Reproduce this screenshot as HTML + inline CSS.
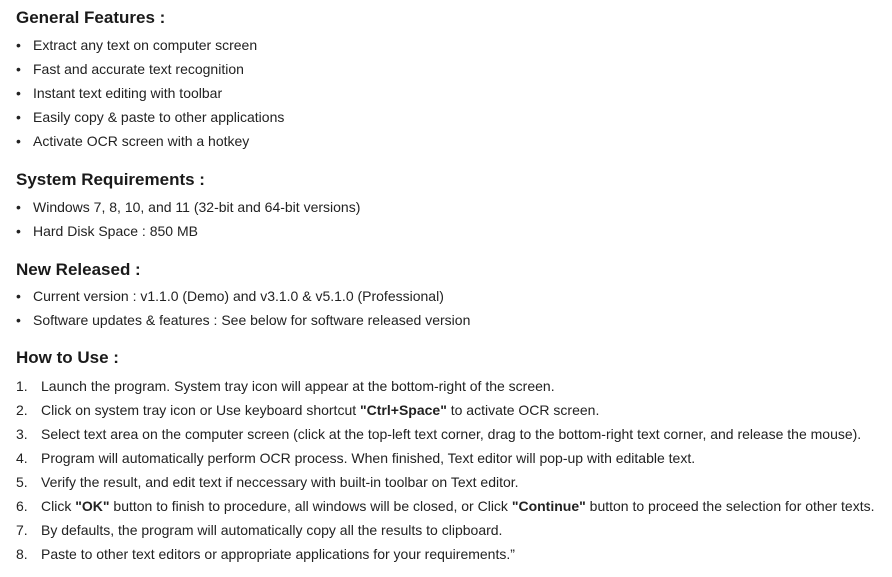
<!DOCTYPE html>
<html><head><meta charset="utf-8"><style>
body{margin:0;background:#fff;width:892px;height:577px;overflow:hidden;font-family:"Liberation Sans",sans-serif;color:#222;position:relative}
.h{position:absolute;left:16px;font-size:17px;font-weight:bold;line-height:20px;color:#1a1a1a}
.b{position:absolute;left:16px;font-size:14px;line-height:16px;white-space:nowrap}
.b span{display:inline-block;width:17px}
.n{position:absolute;left:16px;font-size:14px;line-height:16px;white-space:nowrap}
.n span{display:inline-block;width:25px}
</style></head><body>
<div class="h" style="top:8px">General Features :</div>
<div class="b" style="top:37px"><span>•</span>Extract any text on computer screen</div>
<div class="b" style="top:61px"><span>•</span>Fast and accurate text recognition</div>
<div class="b" style="top:85px"><span>•</span>Instant text editing with toolbar</div>
<div class="b" style="top:109px"><span>•</span>Easily copy &amp; paste to other applications</div>
<div class="b" style="top:133px"><span>•</span>Activate OCR screen with a hotkey</div>
<div class="h" style="top:170px">System Requirements :</div>
<div class="b" style="top:199px"><span>•</span>Windows 7, 8, 10, and 11 (32-bit and 64-bit versions)</div>
<div class="b" style="top:223px"><span>•</span>Hard Disk Space : 850 MB</div>
<div class="h" style="top:260px">New Released :</div>
<div class="b" style="top:288px"><span>•</span>Current version : v1.1.0 (Demo) and v3.1.0 &amp; v5.1.0 (Professional)</div>
<div class="b" style="top:312px"><span>•</span>Software updates &amp; features : See below for software released version</div>
<div class="h" style="top:348px">How to Use :</div>
<div class="n" style="top:378px"><span>1.</span>Launch the program. System tray icon will appear at the bottom-right of the screen.</div>
<div class="n" style="top:402px"><span>2.</span>Click on system tray icon or Use keyboard shortcut <b>"Ctrl+Space"</b> to activate OCR screen.</div>
<div class="n" style="top:426px"><span>3.</span>Select text area on the computer screen (click at the top-left text corner, drag to the bottom-right text corner, and release the mouse).</div>
<div class="n" style="top:450px"><span>4.</span>Program will automatically perform OCR process. When finished, Text editor will pop-up with editable text.</div>
<div class="n" style="top:474px"><span>5.</span>Verify the result, and edit text if neccessary with built-in toolbar on Text editor.</div>
<div class="n" style="top:498px"><span>6.</span>Click <b>"OK"</b> button to finish to procedure, all windows will be closed, or Click <b>"Continue"</b> button to proceed the selection for other texts.</div>
<div class="n" style="top:522px"><span>7.</span>By defaults, the program will automatically copy all the results to clipboard.</div>
<div class="n" style="top:546px"><span>8.</span>Paste to other text editors or appropriate applications for your requirements.”</div>
</body></html>
